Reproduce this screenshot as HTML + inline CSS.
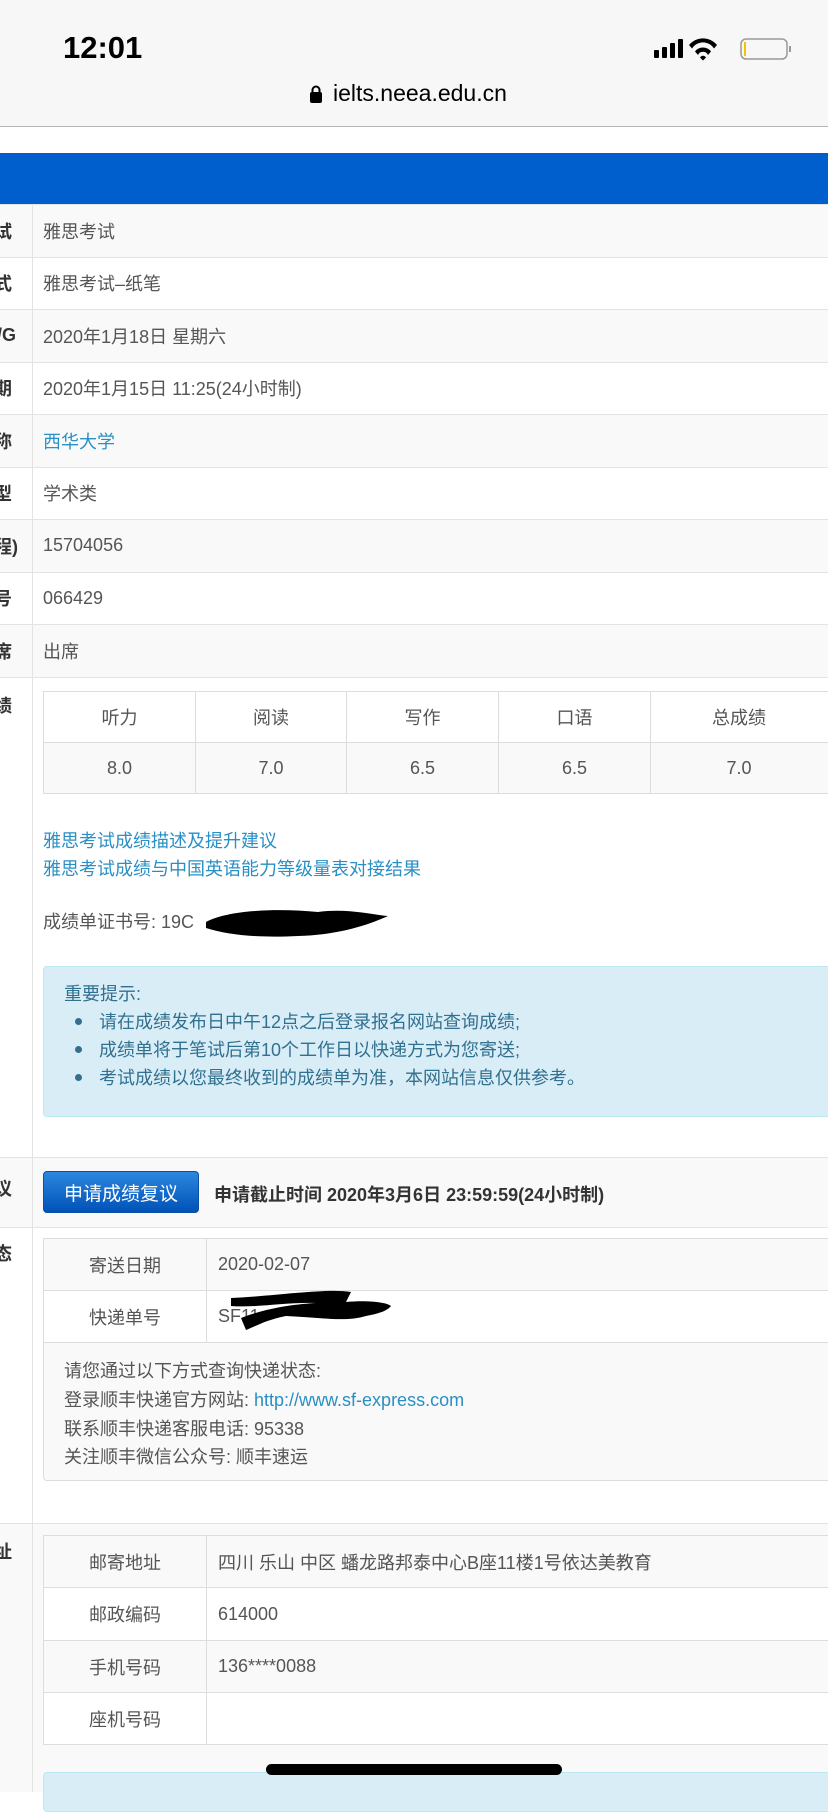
<!DOCTYPE html>
<html><head><meta charset="utf-8"><style>
*{margin:0;padding:0;box-sizing:border-box}
body{width:828px;height:1792px;overflow:hidden;background:#fff;font-family:"Liberation Sans","Noto Sans CJK SC",sans-serif;color:#555;position:relative}
.a{position:absolute}
.t{font-size:18px;white-space:nowrap}
.row{position:absolute;left:0;width:828px;border-top:1px solid #e3e3e3}
.r{position:absolute;left:0;width:828px;font-size:18px;display:flex;align-items:center;white-space:nowrap}
.r b{position:absolute;left:-6px;color:#333}
.r span{position:absolute;left:43px}
.lbl{position:absolute;left:-6px;font-size:18px;font-weight:bold;color:#333}
.vl{position:absolute;left:32px;width:1px;top:204px;height:1588px;background:#e3e3e3}
.cell{position:absolute;border:1px solid #ddd;font-size:18px;display:flex;align-items:center;justify-content:center;color:#555;white-space:nowrap}
.blue{color:#2a8fc4}
.alert{position:absolute;background:#d9edf7;border:1px solid #bce8f1;border-radius:4px;color:#31708f}
.dot{display:inline-block;width:7px;height:7px;border-radius:50%;background:#31708f;margin:0 17px 4px 0;vertical-align:middle}
</style></head><body>
<div class="a" style="left:0;top:0;width:828px;height:127px;background:#f7f7f7;border-bottom:1px solid #b5b5b5"></div>
<div class="a" style="left:63px;top:30px;font-size:31px;font-weight:bold;color:#000">12:01</div>
<svg class="a" style="left:652px;top:36px" width="140" height="28" viewBox="0 0 140 28">
<rect x="2" y="14" width="5" height="8" rx="1" fill="#000"/><rect x="10" y="11" width="5" height="11" rx="1" fill="#000"/><rect x="18" y="7" width="5" height="15" rx="1" fill="#000"/><rect x="26" y="3" width="5" height="19" rx="1" fill="#000"/>
<path d="M37 9 A18 18 0 0 1 65 9 L62 12.5 A13 13 0 0 0 40 12.5Z M43 15.5 A10 10 0 0 1 59 15.5 L56 19 A5.5 5.5 0 0 0 46 19Z M48 21.5 L51 24.5 L54 21.5 A3.5 3.5 0 0 0 48 21.5Z" fill="#000"/>
<rect x="89" y="3" width="46" height="20" rx="5" fill="none" stroke="#999" stroke-width="1.5"/><rect x="137" y="10" width="2" height="6" fill="#999"/><rect x="92" y="6" width="2" height="14" fill="#f5c400"/>
</svg>
<svg class="a" style="left:309px;top:84px" width="14" height="20"><rect x="1" y="8" width="12" height="11" rx="2" fill="#000"/><path d="M3.5 9V6a3.5 3.5 0 0 1 7 0v3" fill="none" stroke="#000" stroke-width="2"/></svg>
<div class="a" style="left:333px;top:80px;font-size:23px;color:#000">ielts.neea.edu.cn</div>
<div class="a" style="left:0;top:153px;width:828px;height:51px;background:#005fcc"></div>

<div class="row" style="top:204px;height:53px;background:#f9f9f9"></div>
<div class="row" style="top:257px;height:52px;background:#fff"></div>
<div class="row" style="top:309px;height:53px;background:#f9f9f9"></div>
<div class="row" style="top:362px;height:52px;background:#fff"></div>
<div class="row" style="top:414px;height:53px;background:#f9f9f9"></div>
<div class="row" style="top:467px;height:52px;background:#fff"></div>
<div class="row" style="top:519px;height:53px;background:#f9f9f9"></div>
<div class="row" style="top:572px;height:52px;background:#fff"></div>
<div class="row" style="top:624px;height:53px;background:#f9f9f9"></div>
<div class="row" style="top:677px;height:480px;background:#fff"></div>
<div class="row" style="top:1157px;height:70px;background:#f9f9f9"></div>
<div class="row" style="top:1227px;height:296px;background:#fff"></div>
<div class="row" style="top:1523px;height:269px;background:#f9f9f9"></div>
<div class="vl"></div>

<div class="r" style="top:204px;height:53px"><b>试</b><span>雅思考试</span></div>
<div class="r" style="top:257px;height:52px"><b>式</b><span>雅思考试–纸笔</span></div>
<div class="r" style="top:309px;height:53px"><b style="left:-3px">/G</b><span>2020年1月18日 星期六</span></div>
<div class="r" style="top:362px;height:52px"><b>期</b><span>2020年1月15日 11:25(24小时制)</span></div>
<div class="r" style="top:414px;height:53px"><b>称</b><span class="blue">西华大学</span></div>
<div class="r" style="top:467px;height:52px"><b>型</b><span>学术类</span></div>
<div class="r" style="top:519px;height:53px"><b>程)</b><span>15704056</span></div>
<div class="r" style="top:572px;height:52px"><b>号</b><span>066429</span></div>
<div class="r" style="top:624px;height:53px"><b>席</b><span>出席</span></div>
<div class="lbl" style="top:692px">绩</div>

<div class="cell" style="left:43px;top:691px;width:153px;height:52px;background:#fff">听力</div>
<div class="cell" style="left:195px;top:691px;width:152px;height:52px;background:#fff">阅读</div>
<div class="cell" style="left:346px;top:691px;width:153px;height:52px;background:#fff">写作</div>
<div class="cell" style="left:498px;top:691px;width:153px;height:52px;background:#fff">口语</div>
<div class="cell" style="left:650px;top:691px;width:200px;height:52px;background:#fff;padding-right:22px">总成绩</div>
<div class="cell" style="left:43px;top:742px;width:153px;height:52px;background:#f9f9f9">8.0</div>
<div class="cell" style="left:195px;top:742px;width:152px;height:52px;background:#f9f9f9">7.0</div>
<div class="cell" style="left:346px;top:742px;width:153px;height:52px;background:#f9f9f9">6.5</div>
<div class="cell" style="left:498px;top:742px;width:153px;height:52px;background:#f9f9f9">6.5</div>
<div class="cell" style="left:650px;top:742px;width:200px;height:52px;background:#f9f9f9;padding-right:22px">7.0</div>

<div class="t a blue" style="left:43px;top:827px">雅思考试成绩描述及提升建议</div>
<div class="t a blue" style="left:43px;top:855px">雅思考试成绩与中国英语能力等级量表对接结果</div>
<div class="t a" style="left:43px;top:908px">成绩单证书号: 19C</div>
<svg class="a" style="left:198px;top:900px" width="200" height="45"><path d="M8 22 C30 10,80 8,120 12 C150 8,175 15,190 16 C170 25,140 35,100 36 C60 38,30 35,8 28Z" fill="#000"/></svg>

<div class="alert" style="left:43px;top:966px;width:810px;height:151px"></div>
<div class="t a" style="left:64px;top:980px;color:#31708f">重要提示:</div>
<div class="t a" style="left:75px;top:1008px;color:#31708f"><i class="dot"></i>请在成绩发布日中午12点之后登录报名网站查询成绩;</div>
<div class="t a" style="left:75px;top:1036px;color:#31708f"><i class="dot"></i>成绩单将于笔试后第10个工作日以快递方式为您寄送;</div>
<div class="t a" style="left:75px;top:1064px;color:#31708f"><i class="dot"></i>考试成绩以您最终收到的成绩单为准，本网站信息仅供参考。</div>

<div class="lbl" style="top:1175px">议</div>
<div class="a" style="left:43px;top:1171px;width:156px;height:42px;border-radius:4px;background:linear-gradient(#2c87dd,#0052b8);border:1px solid #0a4fa6;color:#fff;font-size:19px;display:flex;align-items:center;justify-content:center">申请成绩复议</div>
<div class="t a" style="left:214px;top:1181px;font-weight:bold;color:#333">申请截止时间 2020年3月6日 23:59:59(24小时制)</div>

<div class="lbl" style="top:1240px">态</div>
<div class="a" style="left:43px;top:1238px;width:810px;height:243px;border:1px solid #ddd;border-radius:4px;background:#f9f9f9"></div>
<div class="cell" style="left:43px;top:1238px;width:164px;height:53px;background:#f9f9f9">寄送日期</div>
<div class="cell" style="left:206px;top:1238px;width:650px;height:53px;background:#f9f9f9;justify-content:flex-start;padding-left:11px">2020-02-07</div>
<div class="cell" style="left:43px;top:1290px;width:164px;height:53px;background:#fff">快递单号</div>
<div class="cell" style="left:206px;top:1290px;width:650px;height:53px;background:#fff;justify-content:flex-start;padding-left:11px">SF11</div>
<svg class="a" style="left:226px;top:1288px" width="175" height="50"><path d="M5 10 C50 8,100 0,125 4 L120 14 C140 12,160 14,165 18 C160 24,150 26,140 28 C120 34,100 30,60 28 C40 32,30 38,20 42 L15 30 C40 20,70 16,90 15 C60 14,30 20,5 18Z" fill="#000"/></svg>
<div class="t a" style="left:64px;top:1357px">请您通过以下方式查询快递状态:</div>
<div class="t a" style="left:64px;top:1386px">登录顺丰快递官方网站: <span class="blue">http://www.sf-express.com</span></div>
<div class="t a" style="left:64px;top:1415px">联系顺丰快递客服电话: 95338</div>
<div class="t a" style="left:64px;top:1443px">关注顺丰微信公众号: 顺丰速运</div>

<div class="lbl" style="top:1538px">址</div>
<div class="cell" style="left:43px;top:1535px;width:164px;height:53px;background:#f9f9f9">邮寄地址</div>
<div class="cell" style="left:206px;top:1535px;width:650px;height:53px;background:#f9f9f9;justify-content:flex-start;padding-left:11px">四川 乐山 中区 蟠龙路邦泰中心B座11楼1号依达美教育</div>
<div class="cell" style="left:43px;top:1587px;width:164px;height:54px;background:#fff">邮政编码</div>
<div class="cell" style="left:206px;top:1587px;width:650px;height:54px;background:#fff;justify-content:flex-start;padding-left:11px">614000</div>
<div class="cell" style="left:43px;top:1640px;width:164px;height:53px;background:#f9f9f9">手机号码</div>
<div class="cell" style="left:206px;top:1640px;width:650px;height:53px;background:#f9f9f9;justify-content:flex-start;padding-left:11px">136****0088</div>
<div class="cell" style="left:43px;top:1692px;width:164px;height:53px;background:#fff">座机号码</div>
<div class="cell" style="left:206px;top:1692px;width:650px;height:53px;background:#fff"></div>
<div class="alert" style="left:43px;top:1772px;width:810px;height:40px"></div>
<div class="a" style="left:266px;top:1764px;width:296px;height:11px;border-radius:6px;background:#000"></div>
</body></html>
